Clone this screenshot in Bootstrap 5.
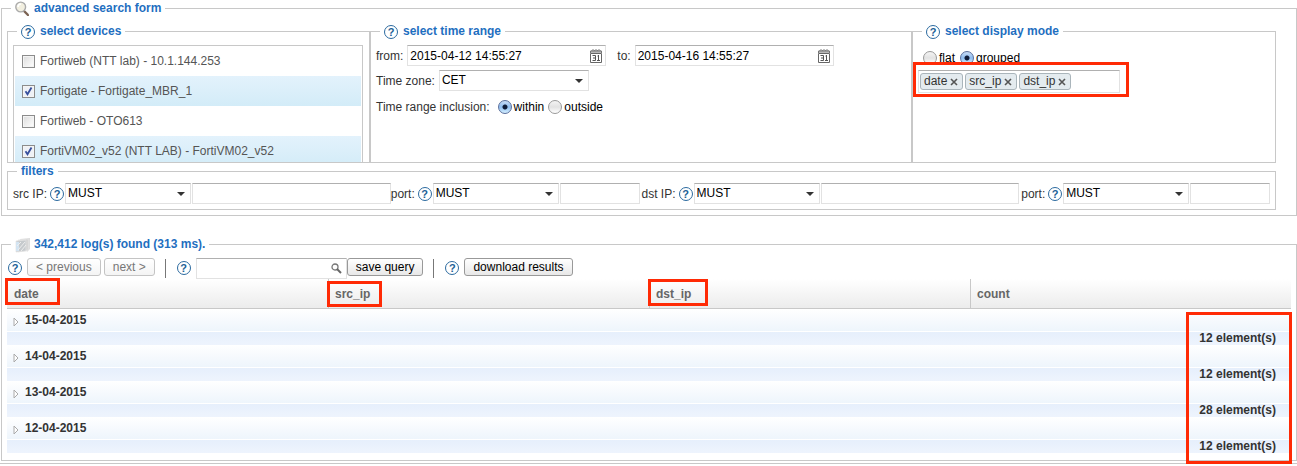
<!DOCTYPE html>
<html lang="en">
<head>
<meta charset="utf-8">
<meta name="viewport" content="width=device-width, initial-scale=1">
<title>Log search</title>
<link href="https://cdn.jsdelivr.net/npm/bootstrap@5.3.0/dist/css/bootstrap.min.css" rel="stylesheet">
<style>
  body { font: 12px/16px "Liberation Sans", Arial, sans-serif; color: #333; background: #fff; }
  .page { border-bottom: 1px solid #c8c8c8; padding: 0 0 2px 1px; }
  fieldset.panel { border: 1px solid #c8c8c8; }
  .panel > legend { float: none; width: auto; height: 17px; margin: 0 0 0 4px; padding: 0 4px;
    display: flex; align-items: center; gap: 5px; font-size: 12px; line-height: 17px; font-weight: bold; color: #1f6fbf; }
  .panel.results > legend { gap: 3px; }
  .search-form { padding: 6px 20px 5px 5px; }
  .results { margin-top: 20px; padding: 5px 5px 7px 5px; }
  .criteria { display: grid; grid-template-columns: 363fr 542fr 364fr; }
  .criteria > .panel { padding: 5px 5px 0; }
  .filters { padding: 3px 5px 5px; }
  .help { flex: none; display: inline-flex; width: 14px; height: 14px; align-items: center; justify-content: center;
    border: 1px solid #2b6a9f; border-radius: 50%; color: #215f96; background: #fff; font-size: 11px; line-height: 12px; font-weight: bold; }

  .device-list { height: 117px; overflow: hidden; margin-right: 1px; padding: 0 1px; border: 1px solid #c8c8c8; border-bottom: 0; }
  .device { height: 30px; padding-left: 7px; gap: 5px; color: #555; }
  .device:nth-child(even) { background: linear-gradient(#e3f2fc, #d3ecf8); }
  .form-check-input { flex: none; width: 13px; height: 13px; margin: 0; border: 1px solid #8c8c8c; background: linear-gradient(135deg, #dcdcdc, #fff); box-shadow: inset 0 0 0 1px #f4f4f4; }
  .form-check-input[type=checkbox] { border-radius: 0; }
  .form-check-input[type=checkbox]:checked { border-color: #8c8c8c; background: #eef1f6 url("data:image/svg+xml,%3Csvg xmlns='http://www.w3.org/2000/svg' viewBox='0 0 11 11'%3E%3Cpath d='M2.5 5.2l2 3 4-6.7' fill='none' stroke='%23374f9c' stroke-width='1.8'/%3E%3C/svg%3E") center/11px; }
  .form-check-input[type=radio] { width: 14px; height: 14px; border-color: #999; background: linear-gradient(#f4f4f4, #e2e2e2 50%, #fff); box-shadow: none; }
  .form-check-input[type=radio]:checked { border-color: #5a6f9c; background: radial-gradient(circle, #101c38 2px, transparent 3px), linear-gradient(#c9dcf5, #8fbdf0 50%, #d5f0ff); }
  .choice { gap: 2px; color: #000; }

  .form-control, .form-select, .field { height: 21px; min-height: 21px; border: 1px solid #e2e2e2; border-top-color: #b0b0b0; border-radius: 0; background-color: #fff; }
  .form-control, .form-select { padding: 0 2px; font-size: 12px; line-height: 16px; color: #000; }
  .form-select { flex: none; width: 126px; padding: 0 0 2px 2px;
    background: #fff url("data:image/svg+xml,%3Csvg xmlns='http://www.w3.org/2000/svg' viewBox='0 0 8 4'%3E%3Cpath d='M0 0h8L4 4z' fill='%23333'/%3E%3C/svg%3E") no-repeat right 5px center / 8px 4px; }
  .field .form-control { border: 0; height: 18px; min-height: 18px; padding: 0 2px; background: transparent; }
  .field .icon-btn { border: 0; padding: 0; background: none; display: flex; }
  .date-field { width: 199px; padding-right: 3px; }
  .zone-select { width: 150px; }
  .to-label { margin: 0 4px 0 11px; }
  .wide { flex: 5 5 200px; min-width: 0; }
  .narrow { flex: 2 2 80px; min-width: 0; }
  .filter-row .help { margin-right: 1px; }
  .filter-row .wide, .filter-row .narrow { margin-left: 1px; }
  .filter-row label { flex: none; white-space: nowrap; }
  .lbl-ip { width: 37px; }
  .lbl-port { width: 27px; }
  .next-filter { margin-left: 2px; }

  .tag-wrap { width: 202px; }
  .tag-field { height: 23px; padding: 0 1px; gap: 2px; }
  .tag { height: 17px; padding: 0 4px 0 3px; gap: 3px; border: 1px solid #aab5bb; border-radius: 3px; background: #e4ebef; color: #333; line-height: 15px; }
  .tag button { border: 0; padding: 0; background: none; display: flex; }
  .mode-row { height: 25px; padding-left: 5px; gap: 5px; }

  /* highlight frames laid over the content */
  .frame { position: absolute; border: 3px solid #ff2a05; pointer-events: none; z-index: 2; }
  .frame-tags { inset: -8px -9px -4px -5px; }
  .frame-date { left: -2px; top: -1px; width: 55px; height: 27px; }
  .frame-ip { left: -2px; top: 2px; width: 55px; height: 26px; }
  .frame-dst { left: -2px; top: 0; width: 60px; height: 27px; }
  .frame-count { right: -1px; top: 33px; width: 106px; bottom: -11px; }

  .tool-row { height: 21px; }
  .tool-row .btn { height: 18px; padding: 0 8px; border: 1px solid #999; border-radius: 3px; font-size: 12px; line-height: 16px; color: #000; background: linear-gradient(#fff, #e8e8e8); }
  .tool-row .btn:disabled { color: #777; border-color: #c4c4c4; background: linear-gradient(#fff, #f4f4f4); opacity: 1; }
  .pager { gap: 3px; }
  .tool-row .help { margin: 3px 5px 0 1px; }
  .sep { width: 1px; height: 19px; margin: 1px 10px 0; background: #777; }
  .search-field { width: 151px; height: 21px; padding-right: 4px; }
  .log-table { width: 100%; table-layout: fixed; border-collapse: separate; border-spacing: 0; font-size: 12px; font-weight: bold; }
  .log-table thead th { position: relative; height: 30px; padding: 0 7px; color: #666; border-bottom: 1px solid #c8c8c8; }
  .log-table thead tr { background: linear-gradient(#fff, #ebebeb); }
  .log-table thead th + th { padding-left: 6px; border-left: 1px solid #c8c8c8; }
  .log-table .day > th { height: 23px; padding: 0 0 0 6px; line-height: 22px; border-bottom: 1px solid #fff; background: linear-gradient(#fff, #eef5fc); }
  .log-table .day svg { margin-right: 6px; vertical-align: -3px; }
  .log-table .total > td { height: 13px; padding: 0 15px 0 0; line-height: 13px; text-align: right; background: linear-gradient(#e6effc, #eef4fd); }
</style>
</head>
<body>
<svg class="d-none" aria-hidden="true">
  <symbol id="calendar" viewBox="0 0 12 14"><path d="M.5 4.500h11v9H.5z" fill="#fff" stroke="#666"/><path d="M.5 4V2h11v2M1 3h10" fill="none" stroke="#777"/><path d="M1.500 2L3 .5 4.500 2 6 .5 7.500 2 9 .5 10.500 2" fill="none" stroke="#666" stroke-width=".9"/><path d="M2.500 6.500h3v5h-3M3 9h2.500M8.500 6v5.500M7.500 7h1M7 11.500h3" fill="none" stroke="#555"/></symbol>
  <symbol id="cross" viewBox="0 0 8 8"><path d="M1 1l6 6M7 1L1 7" stroke="#555" stroke-width="1.600"/></symbol>
  <symbol id="arrow" viewBox="0 0 6 10"><path d="M1 1v8l4-4z" fill="#fff" stroke="#aaa"/></symbol>
</svg>
<main class="page">
  <form>
    <fieldset class="panel search-form">
      <legend>
        <svg width="14" height="15" viewBox="0 0 14 15"><path d="M9 10l4 4" stroke="#7b6252" stroke-width="2.4" stroke-linecap="round"/><circle cx="5.7" cy="6" r="4.9" fill="#f2efe0" stroke="#aaa" stroke-width="1.4"/><path d="M3 6a3 3 0 0 1 3-3" fill="none" stroke="#fff" stroke-width="1.5"/></svg>
        advanced search form
      </legend>
      <div class="criteria">
        <fieldset class="panel">
          <legend><span class="help">?</span>select devices</legend>
          <div class="device-list">
            <label class="device d-flex align-items-center"><input class="form-check-input" type="checkbox">Fortiweb (NTT lab) - 10.1.144.253</label>
            <label class="device d-flex align-items-center"><input class="form-check-input" type="checkbox" checked>Fortigate - Fortigate_MBR_1</label>
            <label class="device d-flex align-items-center"><input class="form-check-input" type="checkbox">Fortiweb - OTO613</label>
            <label class="device d-flex align-items-center"><input class="form-check-input" type="checkbox" checked>FortiVM02_v52 (NTT LAB) - FortiVM02_v52</label>
          </div>
        </fieldset>
        <fieldset class="panel">
          <legend><span class="help">?</span>select time range</legend>
          <div class="d-flex align-items-center">
            <label class="me-1" for="from">from:</label>
            <div class="field date-field d-flex align-items-center"><input class="form-control" id="from" value="2015-04-12 14:55:27"><button type="button" class="icon-btn" aria-label="Pick start date"><svg width="12" height="14"><use href="#calendar"/></svg></button></div>
            <label class="to-label" for="to">to:</label>
            <div class="field date-field d-flex align-items-center"><input class="form-control" id="to" value="2015-04-16 14:55:27"><button type="button" class="icon-btn" aria-label="Pick end date"><svg width="12" height="14"><use href="#calendar"/></svg></button></div>
          </div>
          <div class="d-flex align-items-center mt-1">
            <label class="me-1" for="zone">Time zone:</label>
            <select class="form-select zone-select" id="zone"><option>CET</option></select>
          </div>
          <div class="d-flex align-items-center mt-2">
            <span class="me-2">Time range inclusion:</span>
            <label class="choice d-flex align-items-center me-1"><input class="form-check-input" type="radio" name="inclusion" checked>within</label>
            <label class="choice d-flex align-items-center"><input class="form-check-input" type="radio" name="inclusion">outside</label>
          </div>
        </fieldset>
        <fieldset class="panel">
          <legend><span class="help">?</span>select display mode</legend>
          <div class="mode-row d-flex align-items-center">
            <label class="choice d-flex align-items-center"><input class="form-check-input" type="radio" name="mode">flat</label>
            <label class="choice d-flex align-items-center"><input class="form-check-input" type="radio" name="mode" checked>grouped</label>
          </div>
          <div class="tag-wrap position-relative">
            <div class="field tag-field d-flex align-items-center">
              <span class="tag d-flex align-items-center">date<button type="button" aria-label="Remove date"><svg width="8" height="8"><use href="#cross"/></svg></button></span>
              <span class="tag d-flex align-items-center">src_ip<button type="button" aria-label="Remove src_ip"><svg width="8" height="8"><use href="#cross"/></svg></button></span>
              <span class="tag d-flex align-items-center">dst_ip<button type="button" aria-label="Remove dst_ip"><svg width="8" height="8"><use href="#cross"/></svg></button></span>
            </div>
            <span class="frame frame-tags"></span>
          </div>
        </fieldset>
      </div>
      <fieldset class="panel filters">
        <legend>filters</legend>
        <div class="filter-row d-flex align-items-center">
          <label class="lbl-ip" for="src">src IP:</label><span class="help">?</span>
          <select class="form-select" aria-label="Source IP rule"><option>MUST</option></select><input class="form-control wide" id="src">
          <label class="lbl-port" for="sport">port:</label><span class="help">?</span>
          <select class="form-select" aria-label="Source port rule"><option>MUST</option></select><input class="form-control narrow" id="sport">
          <label class="lbl-ip next-filter" for="dst">dst IP:</label><span class="help">?</span>
          <select class="form-select" aria-label="Destination IP rule"><option>MUST</option></select><input class="form-control wide" id="dst">
          <label class="lbl-port next-filter" for="dport">port:</label><span class="help">?</span>
          <select class="form-select" aria-label="Destination port rule"><option>MUST</option></select><input class="form-control narrow" id="dport">
        </div>
      </fieldset>
    </fieldset>
  </form>

  <fieldset class="panel results">
    <legend>
      <svg width="16" height="16" viewBox="0 0 16 16"><path d="M5 2l10-1v11l-3 3z" fill="#ddd"/><path d="M3 3l10-1v11L3 15z" fill="#cfcfcf" stroke="#e8e8e8" stroke-width=".6"/><path d="M1 4l10-1v11L1 15z" fill="#c6cacd" stroke="#e4e4e4" stroke-width=".8"/><path d="M1 5h3v9H1z" fill="#d3e4f2"/><path d="M3 13L10 5M6 14l5-6M2 9l4-4" stroke="#eee"/></svg>
      342,412 log(s) found (313 ms).
    </legend>
    <div class="tool-row d-flex align-items-start">
      <span class="help">?</span>
      <div class="pager d-flex">
        <button type="button" class="btn" disabled>&lt; previous</button>
        <button type="button" class="btn" disabled>next &gt;</button>
      </div>
      <span class="sep"></span>
      <span class="help">?</span>
      <div class="field search-field d-flex align-items-center"><input class="form-control" aria-label="Search results"><button type="button" class="icon-btn" aria-label="Search"><svg width="11" height="11" viewBox="0 0 11 11"><circle cx="4" cy="4" r="3" fill="none" stroke="#777" stroke-width="1.3"/><path d="M6 6l4 4" stroke="#666" stroke-width="2"/></svg></button></div>
      <button type="button" class="btn">save query</button>
      <span class="sep"></span>
      <span class="help">?</span>
      <button type="button" class="btn">download results</button>
    </div>
    <div class="position-relative">
      <table class="log-table">
        <thead>
          <tr>
            <th scope="col">date<span class="frame frame-date"></span></th>
            <th scope="col">src_ip<span class="frame frame-ip"></span></th>
            <th scope="col">dst_ip<span class="frame frame-dst"></span></th>
            <th scope="col">count</th>
          </tr>
        </thead>
        <tbody>
          <tr class="day"><th colspan="4"><svg width="6" height="10"><use href="#arrow"/></svg>15-04-2015</th></tr>
          <tr class="total"><td colspan="4">12 element(s)</td></tr>
          <tr class="day"><th colspan="4"><svg width="6" height="10"><use href="#arrow"/></svg>14-04-2015</th></tr>
          <tr class="total"><td colspan="4">12 element(s)</td></tr>
          <tr class="day"><th colspan="4"><svg width="6" height="10"><use href="#arrow"/></svg>13-04-2015</th></tr>
          <tr class="total"><td colspan="4">28 element(s)</td></tr>
          <tr class="day"><th colspan="4"><svg width="6" height="10"><use href="#arrow"/></svg>12-04-2015</th></tr>
          <tr class="total"><td colspan="4">12 element(s)</td></tr>
        </tbody>
      </table>
      <span class="frame frame-count"></span>
    </div>
  </fieldset>
</main>
<script src="https://cdn.jsdelivr.net/npm/bootstrap@5.3.0/dist/js/bootstrap.bundle.min.js"></script>
</body>
</html>
